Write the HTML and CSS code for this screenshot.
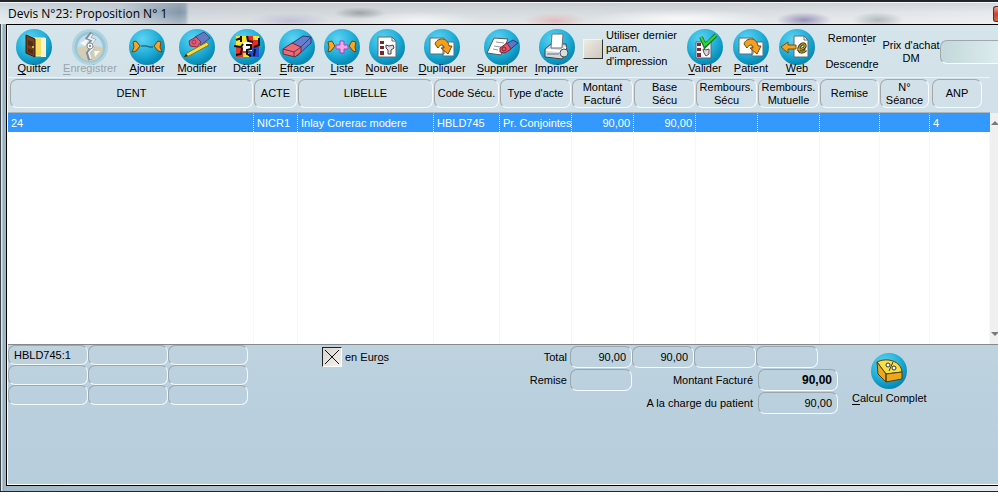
FILE: index.html
```html
<!DOCTYPE html>
<html lang="fr">
<head>
<meta charset="utf-8">
<title>Devis N°23: Proposition N° 1</title>
<link rel="stylesheet" href="styles.css">
</head>
<body>
<div class="window">
  <header class="titlebar">
    <h1>Devis N°23: Proposition N° 1</h1>
    <button class="close" aria-label="Fermer"></button>
  </header>
  <main class="content">
    <div class="toolbar">
      <button class="tool"><svg viewBox="0 0 36 36"><path d="M18 9h11v18H18z" fill="#f4df62" stroke="#fff4b0"/><path d="M25 9h5v19h-5z" fill="#faf3cf"/><path d="M10 6l9 4v18l-9-4z" fill="#75401c" stroke="#3b1d0b"/><path d="M12 11l5 2v5l-5-2zM12 19l5 2v4l-5-2z" fill="#552b12"/><circle cx="17" cy="18" r="1" fill="#f3d66a"/></svg><span><u>Q</u>uitter</span></button>
      <button class="tool" disabled><svg viewBox="0 0 36 36"><circle cx="18" cy="18" r="14" fill="#c5dded" stroke="#85bed2" stroke-width="3"/><path d="M5 19c7-3 19-3 26 0a13 13 0 0 1-26 0z" fill="#d5c6a2"/><path d="M8 14l9-5-4 8zM22 22l6 0-5 6z" fill="#fff"/><path d="M20 4l-4 5 5 2-4 5 3 3-4 5 2 7" fill="none" stroke="#5f7480" stroke-width="4"/><path d="M20 5l-3 4 5 2-4 5 3 3-4 5 2 6" fill="none" stroke="#f0f4f6" stroke-width="2"/><circle cx="18" cy="17" r="3" fill="#fff" stroke="#777"/><circle cx="18" cy="17" r="1" fill="#555"/></svg><span><u>E</u>nregistrer</span></button>
      <button class="tool"><svg viewBox="0 0 36 36"><path d="M4 13l3-1 4 5-4 5-4 1 2-5z" fill="#f3a72c" stroke="#704506"/><path d="M32 13l-3-1-4 5 4 5 4 1-2-5z" fill="#f3a72c" stroke="#704506"/><path d="M12 17h6l2 1h4" fill="none" stroke="#17495b"/></svg><span><u>A</u>jouter</span></button>
      <button class="tool"><svg viewBox="0 0 36 36"><path d="M16 8l9-5 6 6-9 7z" fill="#667ac0" stroke="#394a84"/><path d="M10 12l7-4 5 5-4 5-7-1z" fill="#e45b79" stroke="#823040"/><circle cx="15" cy="13" r="2" fill="none" stroke="#9e3650"/><path d="M8 24L28 13l2 3L10 27l-5 1z" fill="#f5df3c" stroke="#8a7422"/><path d="M5 28l2-3 2 2z" fill="#222"/></svg><span><u>M</u>odifier</span></button>
      <button class="tool"><svg viewBox="0 0 36 36"><path d="M7 7h12v11H7z" fill="#f7e82f"/><path d="M19 7h11v11H19z" fill="#e92b25"/><path d="M7 18h11v10H7z" fill="#ea342a"/><path d="M18 18h12v10H18z" fill="#254fd2"/><path d="M14 13h9v9h-9z" fill="#fff"/><path d="M24 7h6v4h-6zM14 24h6v4h-6z" fill="#f7e82f"/><path d="M7 11l5-2M12 7v6M18 7l1 5 5 1M30 9v7l-5 2M5 17l7 1 2-3M13 19l-1 6-5 1M17 16h5v4l-4 1v4l4 2M26 20l-1 7" fill="none" stroke="#101010" stroke-width="2"/></svg><span>Détai<u>l</u></span></button>
      <button class="tool"><svg viewBox="0 0 36 36"><path d="M12 15L24 7l8 1 0 6-14 13z" fill="#667dcc" stroke="#253b78"/><path d="M4 20l9-6 9 4v5l-6 5-12-3z" fill="#ef6a75" stroke="#6e2734"/><path d="M4 20l11 3 7-5M15 23v5M22 18l10-10" fill="none" stroke="#5b3549"/></svg><span><u>E</u>ffacer</span></button>
      <button class="tool"><svg viewBox="0 0 36 36"><path d="M4 13l4-1 3 5-4 5-3 1 1-5zM32 13l-4-1-3 5 4 5 3 1-1-5z" fill="#f5a920" stroke="#6d4709"/><path d="M16 12h4v4h4v4h-4v4h-4v-4h-4v-4h4z" fill="#f5a4ee" stroke="#9c4bb1"/></svg><span><u>L</u>iste</span></button>
      <button class="tool"><svg viewBox="0 0 36 36"><path d="M9 8h14l4 4v16H9z" fill="#fff" stroke="#666"/><path d="M23 8v4h4" fill="none" stroke="#666"/><path d="M11 12h4v3h-4zM11 17h4v3h-4zM11 22h4v4h-4z" fill="#7a2432"/><path d="M17 16l3 1 4-1 1 3-3 2v4h-3v-4l-2-2z" fill="#e7dce3" stroke="#4c4048"/></svg><span><u>N</u>ouvelle</span></button>
      <button class="tool"><svg viewBox="0 0 36 36"><path d="M6 9h14v16H6zM19 13h11v14H19z" fill="#fff" stroke="#54717c"/><path d="M11 15c2-7 13-7 14 2h3l-4 8-7-6h3c0-4-4-4-6 0z" fill="#f5a01c" stroke="#70470d"/></svg><span><u>D</u>upliquer</span></button>
      <button class="tool"><svg viewBox="0 0 36 36"><path d="M10 9l14 1-7 16-14-2z" fill="#fff" stroke="#555"/><path d="M12 13l8 1M10 17l7 1M9 20l5 1" stroke="#999"/><path d="M22 15l7-4 5 3-10 8z" fill="#5c75c5" stroke="#293c77"/><path d="M16 19l7-5 4 6-6 4-5-1z" fill="#ed5367" stroke="#75283a"/><circle cx="20" cy="20" r="2" fill="none" stroke="#75283a"/></svg><span><u>S</u>upprimer</span></button>
      <button class="tool"><svg viewBox="0 0 36 36"><path d="M6 20l6-5h15l1 8-5 7-17-2z" fill="#d3d9dd" stroke="#3c4448"/><path d="M13 5h11l-1 14H12z" fill="#fff" stroke="#6a7175"/><path d="M7 21l14 1 6-4" fill="none" stroke="#fff" stroke-width="2"/><circle cx="25" cy="24" r="4" fill="#d9dde0" stroke="#4a5357"/><path d="M8 25h12" stroke="#6b7478"/></svg><span><u>I</u>mprimer</span></button>
      <label class="print-option"><input type="checkbox" class="raised"><span>Utiliser dernier<br>param.<br>d'impression</span></label>
      <button class="tool"><svg viewBox="0 0 36 36"><path d="M9 13h15v16H9z" fill="#fff" stroke="#56666e"/><path d="M10 14h4v3h-4zM10 19h4v3h-4zM10 24h4v4h-4z" fill="#832638"/><path d="M16 20l3 1 3-1v5l-3 2-2-3z" fill="#e4d6dd" stroke="#554b50"/><path d="M14 8l4 9L29 6" fill="none" stroke="#167b22" stroke-width="4"/><path d="M14 8l4 8L29 6" fill="none" stroke="#32d642" stroke-width="2"/></svg><span><u>V</u>alider</span></button>
      <button class="tool"><svg viewBox="0 0 36 36"><path d="M6 9h14v16H6zM19 13h11v14H19z" fill="#fff" stroke="#54717c"/><path d="M11 15c2-7 13-7 14 2h3l-4 8-7-6h3c0-4-4-4-6 0z" fill="#f5a01c" stroke="#70470d"/></svg><span><u>P</u>atient</span></button>
      <button class="tool"><svg viewBox="0 0 36 36"><path d="M15 7h10l4 4v17H15z" fill="#fff" stroke="#5d6c73"/><path d="M25 7v4h4" fill="none" stroke="#5d6c73"/><path d="M18 20c5 1 9-1 8-4s-6 0-6 4 4 4 7 1" fill="none" stroke="#544415" stroke-width="3"/><path d="M18 20c5 1 9-1 8-4s-6 0-6 4 4 4 7 1" fill="none" stroke="#ddbb23"/><path d="M2 18l7-5v3h8v4H9v4z" fill="#f5a323" stroke="#76500c"/></svg><span><u>W</u>eb</span></button>
      <div class="moves"><button>Remon<u>t</u>er</button><button>Descend<u>r</u>e</button></div>
      <label class="price-label" for="price">Prix d'achat<br>DM</label>
      <input id="price" class="price" type="text">
    </div>
    <section class="grid">
      <table>
        <colgroup><col><col class="c-act"><col class="c-name"><col class="c-code"><col class="c-type"><col class="c-money"><col class="c-money"><col class="c-money"><col class="c-money"><col class="c-rem"><col class="c-visit"><col class="c-anp"></colgroup>
        <thead><tr><th><span>DENT</span></th><th><span>ACTE</span></th><th><span>LIBELLE</span></th><th><span>Code Sécu.</span></th><th><span>Type d'acte</span></th><th><span>Montant<br>Facturé</span></th><th><span>Base<br>Sécu</span></th><th><span>Rembours.<br>Sécu</span></th><th><span>Rembours.<br>Mutuelle</span></th><th><span>Remise</span></th><th><span>N°<br>Séance</span></th><th><span>ANP</span></th></tr></thead>
        <tbody>
          <tr class="selected"><td>24</td><td>NICR1</td><td>Inlay Corerac modere</td><td>HBLD745</td><td>Pr. Conjointes</td><td class="num">90,00</td><td class="num">90,00</td><td></td><td></td><td></td><td></td><td>4</td></tr>
          <tr class="blank"><td></td><td></td><td></td><td></td><td></td><td></td><td></td><td></td><td></td><td></td><td></td><td></td></tr>
        </tbody>
      </table>
      <div class="scroll"><svg viewBox="0 0 8 4"><path d="M1 4l4-4 4 4z"/></svg><svg viewBox="0 0 8 4"><path d="M1 0l4 4 4-4z"/></svg></div>
    </section>
    <section class="summary">
      <div class="codes">
        <input class="field" aria-label="Code 1" value="HBLD745:1"><input class="field" aria-label="Code 2"><input class="field" aria-label="Code 3">
        <input class="field" aria-label="Code 4"><input class="field" aria-label="Code 5"><input class="field" aria-label="Code 6">
        <input class="field" aria-label="Code 7"><input class="field" aria-label="Code 8"><input class="field" aria-label="Code 9">
      </div>
      <label class="euros"><input type="checkbox" class="sunken" checked><span>en Eur<u>o</u>s</span></label>
      <div class="totals">
        <label for="total">Total</label>
        <input id="total" class="field num" value="90,00"><input class="field num" aria-label="Total base Sécu" value="90,00"><input class="field num" aria-label="Total remboursement Sécu"><input class="field num" aria-label="Total remboursement mutuelle">
        <label for="discount" class="line-start">Remise</label>
        <input id="discount" class="field num">
        <label for="billed" class="wide">Montant Facturé</label>
        <input id="billed" class="field num amount strong" value="90,00">
        <label for="due" class="wide">A la charge du patient</label>
        <input id="due" class="field num amount" value="90,00">
      </div>
      <button class="tool calc"><svg viewBox="0 0 36 36"><path d="M6 9c10-5 24-1 25 10l-16 2z" fill="#f8df45" stroke="#4f3f0d"/><path d="M6 9l9 12v8l-8-8zM15 21l16-2v7l-16 3z" fill="#eda71e" stroke="#4f3f0d"/><path d="M22 9l-4 9" stroke="#333"/><circle cx="17" cy="12" r="2" fill="#fff" stroke="#333"/><circle cx="23" cy="15" r="2" fill="#fff" stroke="#333"/></svg><span><u>C</u>alcul Complet</span></button>
    </section>
  </main>
</div>
</body>
</html>
```
FILE: styles.css
```css
* { box-sizing: border-box; }
body { margin: 0; font: 11px/13px "Liberation Sans", Arial, sans-serif; color: #000; }
button, input { font: inherit; color: inherit; }
button { padding: 0; border: 0; background: none; }
u { text-underline-offset: 2px; }

.window {
  min-height: 100vh;
  display: flex;
  flex-direction: column;
  padding: 0 0 5px 6px;
  border-top: 2px solid #22242a;
  border-bottom: 1px solid #22252b;
  background: linear-gradient(90deg, #3b4349 0 1px, #dbeaf2 1px 2px, #8fa9b9 3px, #a2bac8 5px, #b7c6cf 40%, #e3e9ec);
  overflow: hidden;
}
.titlebar {
  height: 22px;
  margin-left: -6px;
  padding-left: 8px;
  display: flex;
  justify-content: space-between;
  align-items: center;
  border-top: 1px solid #f4f8fa;
  background:
    radial-gradient(ellipse 26px 6px at 360px 10px, #6e747888, transparent),
    radial-gradient(ellipse 40px 8px at 290px 18px, #a9a6cc88, transparent),
    radial-gradient(ellipse 32px 8px at 555px 18px, #e8999988, transparent),
    radial-gradient(ellipse 60px 10px at 420px 18px, #ffffffaa, transparent),
    radial-gradient(ellipse 90px 10px at 680px 16px, #ffffffcc, transparent),
    radial-gradient(ellipse 28px 8px at 804px 17px, #7d74a8bb, transparent),
    radial-gradient(ellipse 26px 8px at 878px 17px, #9aa1a6aa, transparent),
    linear-gradient(#b3b9be66, #e8edf000 45%, #ffffff55),
    linear-gradient(90deg, #dce4ea 0, #c6d2db 12%, #8398aa 18%, #8fa2b2 185px, #cfd5da 189px, #d5dadd 40%, #d7dcdf 70%, #e6eaed);
}
.titlebar h1 { margin: 0; font: 12px/18px "Open Sans", "Noto Sans", sans-serif; }
.close { width: 5px; height: 16px; border: 1px solid #5b2825; border-right: 0; border-radius: 3px 0 0 3px; background: linear-gradient(#e7a295, #c6432b 50%, #d5694c); }

.content {
  flex: 1;
  display: flex;
  flex-direction: column;
  border-top: 1px solid #000;
  border-left: 1px solid #000;
  border-bottom: 1px solid #000;
  box-shadow: inset 1px -1px #fff;
  padding: 0 0 1px 1px;
  background: linear-gradient(#d6e4eb, #c9dae4 45%, #bed2df 70%, #b6cddc);
}

.toolbar {
  display: grid;
  grid-template-columns: 52px 60px 54px 46px 54px 46px 44px 46px 64px 56px 53px 97px 50px 42px 50px 60px 58px 1fr;
  height: 52px;
  padding-top: 4px;
  align-items: start;
}
.tool { display: flex; flex-direction: column; align-items: center; white-space: nowrap; }
.tool svg {
  width: 36px;
  height: 36px;
  border-radius: 50%;
  background: radial-gradient(circle at 38% 28%, #5ed3f3, #22afd9 45%, #078db9 72%, #03749e);
}
.tool span { margin-top: -3px; position: relative; }
.tool:disabled svg { background: #a4d0df; opacity: .75; }
.tool:disabled { color: #98a5ac; }
.print-option { display: flex; align-items: center; gap: 3px; white-space: nowrap; }
input[type="checkbox"] { appearance: none; flex: none; width: 20px; height: 20px; margin: 0; }
.raised { border: 1px solid #f6f4ef; border-right-color: #333; border-bottom-color: #333; background: linear-gradient(135deg, #eeebe4, #ccc8be); }
.sunken {
  border: 1px solid #222;
  border-right-color: #fff;
  border-bottom-color: #fff;
  background:
    linear-gradient(45deg, transparent 49%, #111 49% 52%, transparent 52%) center / 14px 14px no-repeat,
    linear-gradient(-45deg, transparent 49%, #111 49% 52%, transparent 52%) center / 14px 14px no-repeat,
    linear-gradient(135deg, #d8d3cd, #f5f2ee);
}
.moves { display: grid; gap: 13px; padding-top: 3px; justify-items: center; }
.price-label { padding-top: 10px; text-align: center; white-space: nowrap; }
.price { width: 100%; min-width: 0; height: 24px; margin-top: 11px; border: 1px solid #a1a7a9; border-right: 0; border-bottom-color: #fff; border-radius: 7px 0 0 7px; background: linear-gradient(90deg, #c2d8da, #dcebed); }

.grid { display: flex; border-bottom: 1px solid #85898c; }
table { flex: 1; width: 100%; table-layout: fixed; border-collapse: separate; border-spacing: 0; }
.c-act { width: 44px; }
.c-name { width: 136px; }
.c-code { width: 66px; }
.c-type { width: 72px; }
.c-money { width: 62px; }
.c-rem { width: 60px; }
.c-visit { width: 50px; }
.c-anp { width: 60px; }
th { height: 36px; padding: 1px 1px 4px 0; border-bottom: 1px solid #a9b6bd; border-top: 1px solid #edf4f7; font-weight: 400; }
th:first-child { padding-left: 2px; }
th:last-child { padding-right: 8px; padding-left: 2px; }
th span { display: flex; align-items: center; justify-content: center; height: 29px; white-space: nowrap; border: 1px solid #a3a9ab; border-right-color: #f8fbfc; border-bottom-color: #f8fbfc; border-radius: 7px; }
td { height: 19px; padding: 1px 3px 0; border-right: 1px dotted #d6e9ff; white-space: nowrap; }
td:last-child { border-right: 0; }
.selected td { color: #fff; background: #3399ff; border-top: 1px solid #80868a; }
.blank td { height: 212px; background: #fff; border-right: 1px solid #f7f7f7; }
.num { text-align: right; }
.scroll { width: 8px; flex: none; display: flex; flex-direction: column; justify-content: space-between; margin-top: 36px; padding: 8px 0; background: #f0f0f0; }
.scroll svg { width: 8px; height: 4px; fill: #77797b; }

.summary { flex: 1; display: flex; align-items: flex-start; }
.codes { display: grid; grid-template-columns: repeat(3, 80px); }
.codes .field { height: 20px; padding: 0 5px; }
.field { width: 100%; min-width: 0; height: 22px; border: 1px solid #9ba6ad; border-right-color: #f5fafc; border-bottom-color: #f5fafc; border-radius: 7px; background: none; }
.euros { display: flex; align-items: center; gap: 3px; margin: 2px 0 0 74px; width: 72px; white-space: nowrap; }
.totals { display: grid; grid-template-columns: 46px repeat(4, 62px) 20px; grid-auto-rows: 22px; row-gap: 1px; align-items: center; margin: 1px 0 0 130px; }
.totals label { text-align: right; padding-right: 3px; white-space: nowrap; }
.totals .field { padding: 0 5px; }
.line-start { grid-column: 1; }
.wide { grid-column: 3 / 5; }
.totals .amount { grid-column: 5 / 7; justify-self: end; width: 80px; }
.totals .strong { font-weight: 700; font-size: 12px; }
.calc { margin: 8px 0 0 14px; }
.calc span { margin-top: 3px; }
```
